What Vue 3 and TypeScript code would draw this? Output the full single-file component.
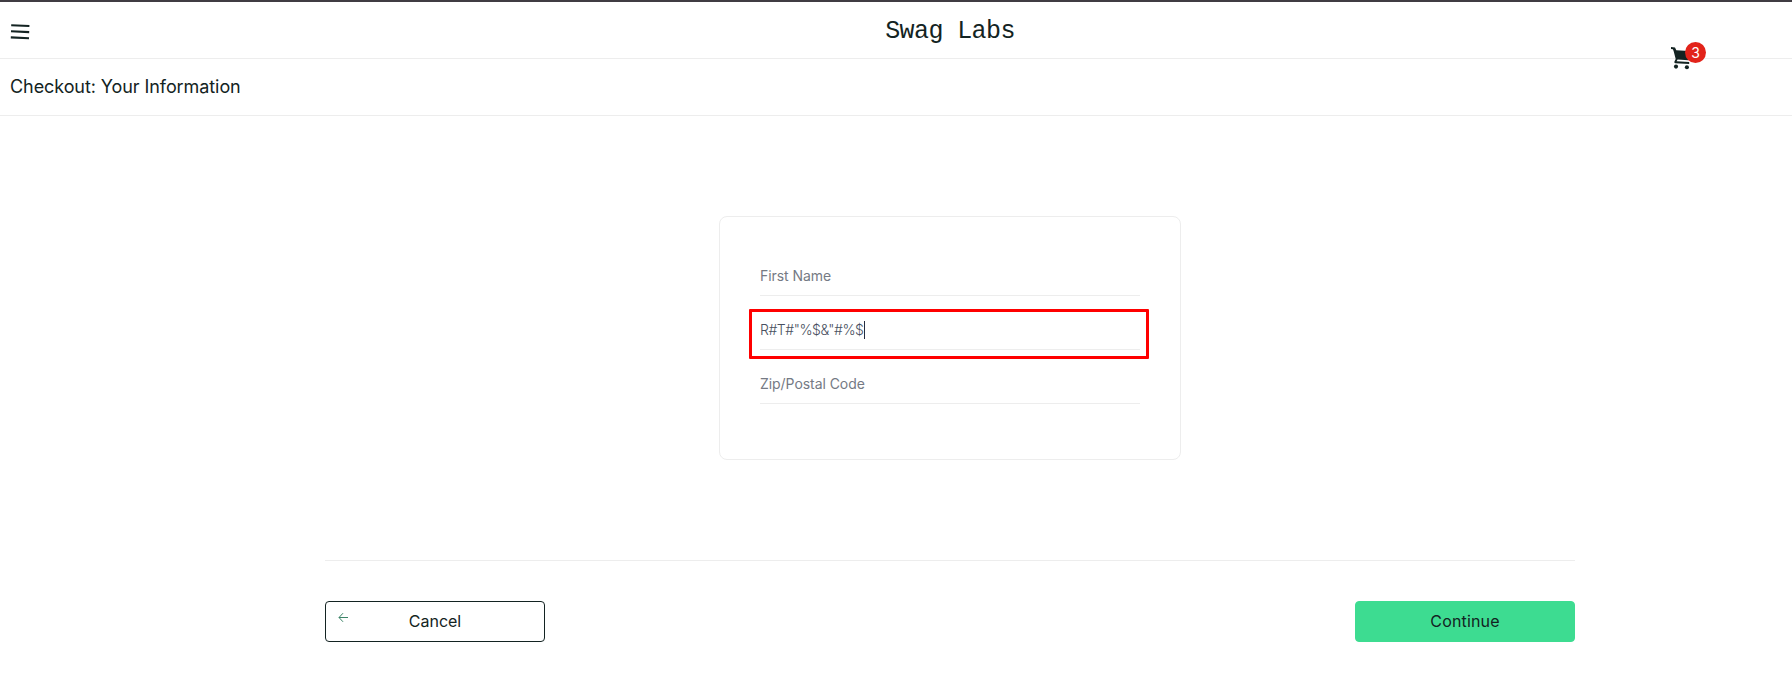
<script setup lang="ts">
import { ref } from 'vue'

interface Field {
  id: string
  placeholder: string
  value: string
  active: boolean
}

const cartCount = ref(3)
const fields = ref<Field[]>([
  { id: 'first-name', placeholder: 'First Name', value: '', active: false },
  { id: 'last-name', placeholder: 'Last Name', value: 'R#T#"%$&"#%$', active: true },
  { id: 'postal-code', placeholder: 'Zip/Postal Code', value: '', active: false },
])
</script>

<template>
  <div class="page">
    <header class="header">
      <button class="menu" type="button" aria-label="Open Menu">
        <svg width="20" height="18" viewBox="0 0 20 18">
          <path d="M1.2 2.2 19.4 3M1 8.3 19.2 9.1M.8 14.4 19 15.2" fill="none" stroke="#132322" stroke-width="2.1" />
        </svg>
      </button>
      <div class="logo">Swag Labs</div>
      <a class="cart" aria-label="Cart">
        <svg class="cart-icon" width="20" height="24" viewBox="0 0 20 24">
          <path fill-rule="evenodd" d="M1 1.1 5 1.4 6.3 4.3 19 5.1V12.7L18.4 14.3 7.6 13.6 6.6 15.2 19.2 15.9V17.9L5.4 17.2C4.3 17 4.1 15.8 4.7 14.9L5.7 13 3.6 5 2.9 3.2 1 3.1Z" fill="#132322" />
          <circle cx="6" cy="20.6" r="2.05" fill="#132322" />
          <circle cx="16.9" cy="21.2" r="2.05" fill="#132322" />
        </svg>
        <span class="badge">{{ cartCount }}</span>
      </a>
    </header>
    <div class="subheader"><span class="title">Checkout: Your Information</span></div>

    <main class="content">
      <form class="card" @submit.prevent>
        <div v-for="f in fields" :key="f.id" class="field" :class="{ active: f.active }">
          <span v-if="f.value" class="value">{{ f.value }}</span>
          <span v-else class="placeholder">{{ f.placeholder }}</span>
          <i v-if="f.active" class="caret"></i>
        </div>
      </form>
      <footer class="actions">
        <button class="btn cancel" type="button">
          <svg class="back" width="11" height="11" viewBox="0 0 11 11">
            <path d="M1 5.5H10M5 1.2 1 5.5 5 9.8" fill="none" stroke="#3c8468" stroke-width="1" />
          </svg>
          <span>Cancel</span>
        </button>
        <button class="btn continue" type="button"><span class="continue-label">Continue</span></button>
      </footer>
    </main>
  </div>
</template>

<style>
body {
  margin: 0;
  background: #fff;
}
</style>

<style scoped>
.page {
  box-sizing: border-box;
  width: 100%;
  height: 683px;
  overflow: hidden;
  border-top: 2px solid #403c43;
  background: #fff;
  color: #132322;
  font-family: Inter, "Liberation Sans", sans-serif;
}
.header {
  position: relative;
  box-sizing: border-box;
  display: flex;
  align-items: center;
  height: 57px;
  border-bottom: 1px solid #ededed;
}
.menu {
  display: flex;
  margin: 3px 0 0 10px;
  padding: 0;
  border: 0;
  background: none;
}
.logo {
  flex: 1;
  padding: 3px 0 0 78px;
  text-align: center;
  font: 25px/36px "Liberation Mono", monospace;
  letter-spacing: -0.6px;
}
.cart {
  position: absolute;
  left: 1670px;
  top: 40px;
  width: 38px;
  height: 32px;
}
.cart-icon {
  position: absolute;
  left: 0;
  top: 4px;
}
.badge {
  position: absolute;
  left: 15px;
  top: 0;
  width: 21px;
  height: 21px;
  border-radius: 50%;
  background: #e2231a;
  color: #fff;
  font-size: 14px;
  line-height: 21px;
  text-align: center;
}
.subheader {
  box-sizing: border-box;
  display: flex;
  align-items: center;
  height: 57px;
  padding: 0 0 1px 10px;
  border-bottom: 1px solid #ededed;
  font-size: 18px;
}
.title {
  letter-spacing: -0.08px;
}
.content {
  display: flex;
  flex-direction: column;
  width: 1250px;
  margin-left: 325px;
  padding-top: 100px;
}
.card {
  box-sizing: border-box;
  display: flex;
  flex-direction: column;
  gap: 13px;
  align-self: center;
  width: 462px;
  height: 244px;
  padding: 38px 40px 0;
  border: 1px solid #ededed;
  border-radius: 8px;
}
.field {
  position: relative;
  box-sizing: border-box;
  display: flex;
  align-items: center;
  height: 41px;
  padding-top: 2px;
  border-bottom: 1px solid #ededed;
  color: #485060;
  font-size: 14px;
  line-height: 20px;
}
.placeholder {
  color: #757a84;
  letter-spacing: -0.06px;
}
.value {
  font-weight: 300;
  letter-spacing: -0.45px;
}
.field.active::after {
  content: "";
  position: absolute;
  left: -11px;
  top: 0;
  width: 394px;
  height: 44px;
  border: 3px solid #f00;
  border-radius: 1px;
}
.caret {
  width: 1px;
  height: 18px;
  background: #252c40;
}
.actions {
  display: flex;
  justify-content: space-between;
  margin-top: 100px;
  padding-top: 40px;
  border-top: 1px solid #ededed;
}
.btn {
  position: relative;
  box-sizing: border-box;
  width: 220px;
  height: 41px;
  padding: 0;
  border: 1px solid #132322;
  border-radius: 4px;
  background: #fff;
  color: #132322;
  font: 16px/39px Inter, "Liberation Sans", sans-serif;
}
.continue {
  border-color: #3ddc91;
  background: #3ddc91;
}
.continue-label {
  letter-spacing: 0.15px;
}
.back {
  position: absolute;
  left: 12px;
  top: 10px;
}
</style>
